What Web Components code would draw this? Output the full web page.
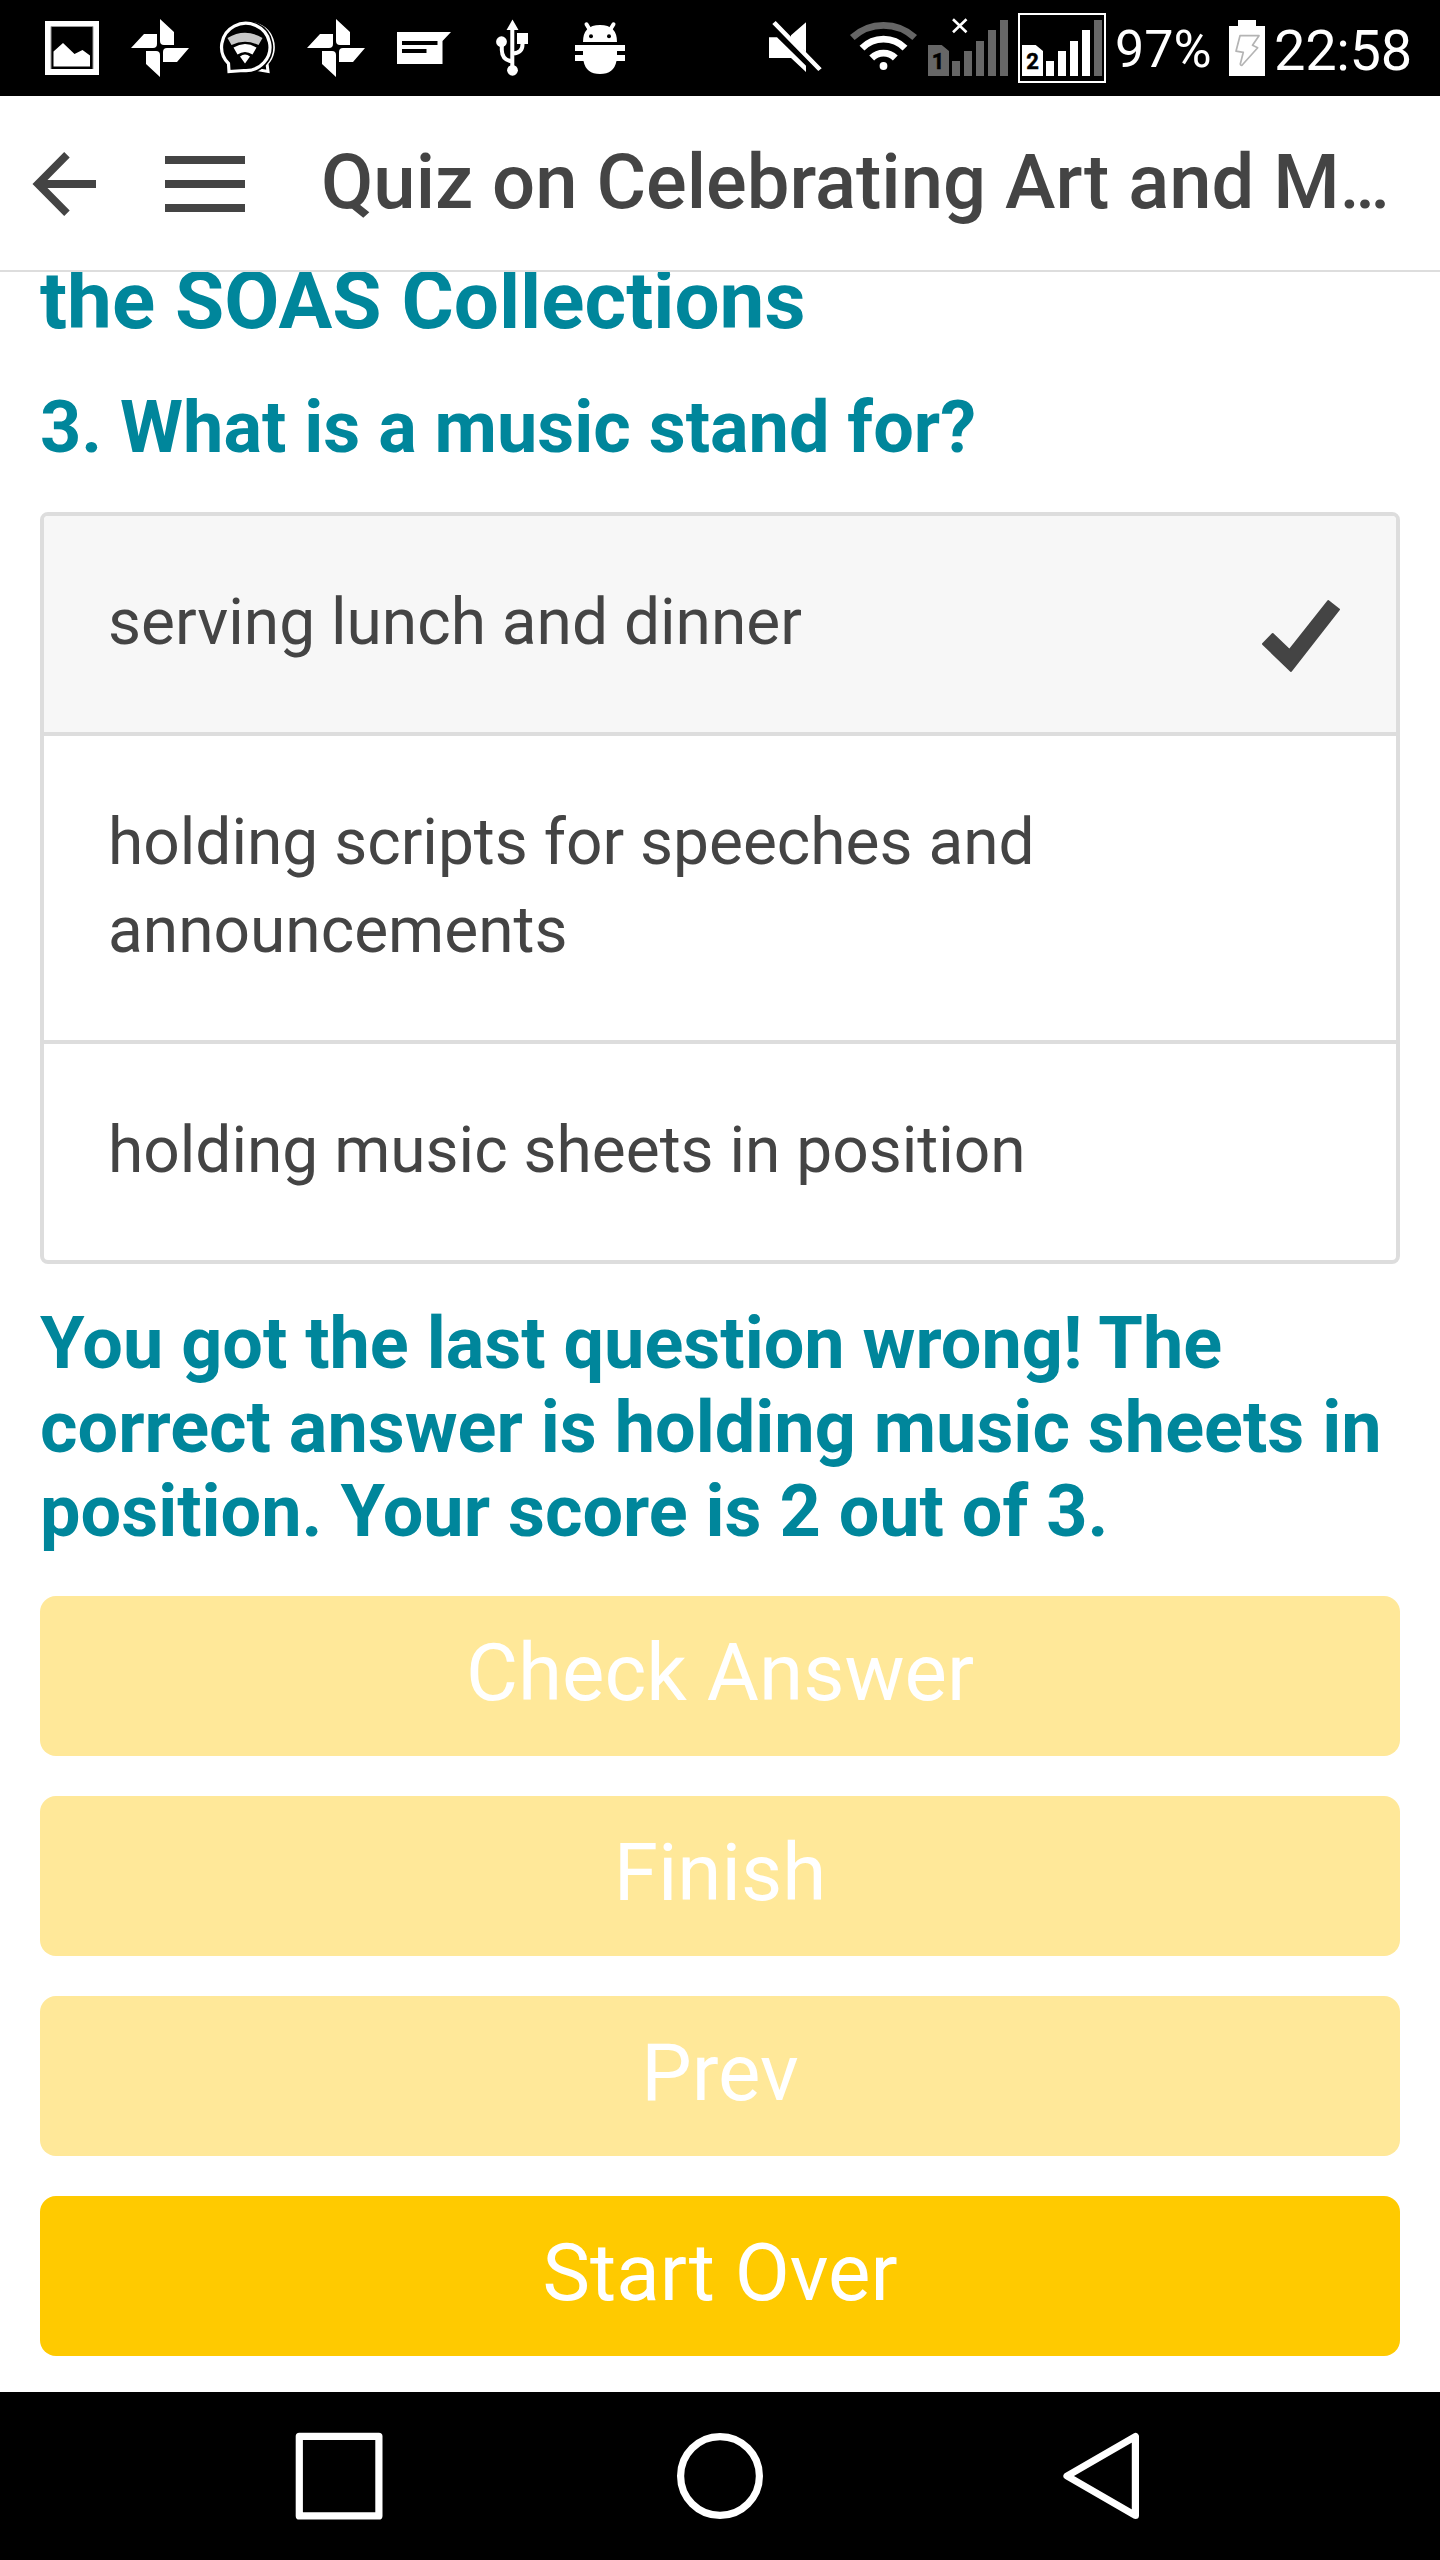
<!DOCTYPE html>
<html lang="en">
<head>
<meta charset="utf-8">
<title>Quiz</title>
<style>
html, body { margin: 0; }
body { width: 1440px; height: 2560px; overflow: hidden; background: #fff; font-family: Roboto, "Noto Sans", sans-serif; }
</style>
</head>
<body>
<quiz-app></quiz-app>

<script>
const define = (name, html, setup) => customElements.define(name, class extends HTMLElement {
  constructor() {
    super();
    const template = document.createElement('template');
    template.innerHTML = html;
    this.attachShadow({ mode: 'open' }).append(template.content.cloneNode(true));
  }
  connectedCallback() { if (setup) setup(this, this.shadowRoot); }
});

/* Status bar glyphs: [left edge, width, drawing] on a 96px tall strip */
const pinwheel = '<path d="M160 19L174 32V45H164Q160 45 160 41ZM131 48L144 34H157V44Q157 48 153 48ZM189 48L177 62H163V52Q163 48 167 48ZM160 77L146 64V51H156Q160 51 160 55Z"/>';
const glyphs = {
  image: [45, 54, '<path fill-rule="evenodd" d="M45 21H99V75H45ZM51 27V69H93V27Z"/><path fill="none" stroke="#999" d="M51 69V26.5H93V69"/><path d="M53.5 51.500L63 43L74.500 54L82.500 50L90 55.500V66.500H53.500Z"/>'],
  pinwheel: [131, 58, pinwheel],
  chat: [218, 60, `
    <g fill="none" stroke="#fff" stroke-width="3.200">
      <path d="M253 23.500A24 24 0 0 1 267 63.500L268 71.500L251 68.500" stroke-width="3"/>
      <path fill="#000" stroke="#000" stroke-width="6" d="M228.500 63A24 23.500 0 1 1 244 70.500L229 71.500Z"/>
      <path fill="#000" d="M228.500 63.500A24.200 23.600 0 1 1 244 70.500L229 71.500Z"/>
    </g>
    <path fill="#c8c8c8" d="M227.500 38Q245 27.500 262.500 38L258.500 45Q245 38.500 231.500 45Z"/>
    <path d="M233.500 47.500Q245 40.500 256.500 47.500L252.500 54.500Q245 49.500 237.500 54.500ZM240 56.500Q245 52.500 250 56.500L245 63.500Z"/>`],
  message: [397, 54, '<path fill-rule="evenodd" d="M397 32H451L442.500 41V64H397ZM402 41V45H437.500V41ZM402 49V53H426.500V49Z"/>'],
  usb: [496, 32, '<path d="M512.500 19.500L518.500 30H506.500ZM517 33H528V44H517Z"/><circle cx="501.500" cy="41.700" r="5.400"/><circle cx="512.500" cy="70.300" r="5.400"/><g fill="none" stroke="#fff" stroke-width="4"><path d="M512.300 28V68M501.800 44V50Q502 60 512 61.500M522.500 43Q523 53 513 53.500"/></g>'],
  bug: [575, 50, '<path d="M583 42Q583 25 600 25Q617 25 617 42ZM575 45H625V51H617V55H625V61H616.500Q614 74 600 74Q586 74 583.500 61H575V55H583V51H575Z"/><path fill="none" stroke="#fff" stroke-width="4" stroke-linecap="round" d="M586.500 24.300L590 30M613.500 24.300L610 30"/><g fill="#000"><circle cx="591" cy="36.300" r="2"/><circle cx="609" cy="36.300" r="2"/></g>'],
  mute: [769, 54, '<path d="M769 37.300H777L806 65.700V72L791 58H769ZM791 35.300L806 22.300V52L791 37ZM772.300 24L775.700 21L821.700 68.300L818.300 71Z"/>'],
  wifi: [850, 67, '<g fill="none" stroke="#fff" stroke-width="6.800"><path stroke="#666" d="M852.300 37.600A46 46 0 0 1 914.700 37.600"/><path d="M862 48.200A30 30 0 0 1 905 48.200"/><path d="M871.700 58A16.500 16.500 0 0 1 895.300 58"/></g><circle cx="883.500" cy="66" r="3.900"/>'],
  sim1: [928, 80, '<path fill="#666" d="M928 45H941.700L949 51V76H928ZM952 61H960V76H952ZM964 51H972V76H964ZM976 41H984V76H976ZM988 30H996V76H988ZM1000 20H1008V76H1000Z"/><text x="938" y="69" font-size="22" font-weight="700" text-anchor="middle" fill="#000" stroke="#000" stroke-width=".5">1</text><path fill="none" stroke="#fff" stroke-width="2.600" d="M953 19.300L966.500 32.300M966.500 19.300L953 32.300"/>'],
  sim2: [1018, 88, '<path fill="none" stroke="#fff" stroke-width="2" d="M1019 14H1105V82H1019Z"/><path d="M1022 45H1035.700L1043 51V76H1022ZM1046 61H1054V76H1046ZM1058 51H1066V76H1058ZM1070 41H1078V76H1070ZM1082 30H1090V76H1082Z"/><path fill="#666" d="M1094 20H1102V76H1094Z"/><text x="1032.500" y="69" font-size="22" font-weight="700" text-anchor="middle" fill="#000" stroke="#000" stroke-width=".5">2</text>'],
  battery: [1229, 36, '<path d="M1238 20H1256V26H1265V76H1229V26H1238Z"/><path fill="none" stroke="#b4b4b4" stroke-width="1.700" stroke-linejoin="round" d="M1240 35.700H1259L1252.500 45.300L1257.700 47.700L1242 65.300Q1240.500 65.500 1240.300 64L1243.300 52.300L1236 51.200Z"/>']
};

define('status-glyph', `
<style>:host{display:block;flex:none;height:96px}svg{display:block;overflow:visible;fill:#fff;font-family:Roboto,sans-serif}</style>
<svg height="96"></svg>`, (host, root) => {
  const [x, w, art] = glyphs[host.getAttribute('name')];
  const svg = root.querySelector('svg');
  svg.setAttribute('width', w);
  svg.setAttribute('viewBox', `${x} 0 ${w} 96`);
  svg.innerHTML = art;
});

define('status-bar', `
<style>
:host{display:flex;justify-content:space-between;height:96px;background:#000;color:#fff;padding:0 27px 0 45px;flex:none}
div{display:flex}
.right{width:644px}
span{white-space:nowrap;flex:none}
.pct{font-size:52px;line-height:100px;width:112px;margin-left:9px;margin-right:2px;box-sizing:border-box}
.time{font-size:56px;line-height:102px;margin-left:9px;letter-spacing:-.3px}
</style>
<div>
<status-glyph name="image"></status-glyph>
<status-glyph name="pinwheel" style="margin-left:32px"></status-glyph>
<status-glyph name="chat" style="margin-left:29px"></status-glyph>
<status-glyph name="pinwheel" style="margin-left:29px"></status-glyph>
<status-glyph name="message" style="margin-left:32px"></status-glyph>
<status-glyph name="usb" style="margin-left:45px"></status-glyph>
<status-glyph name="bug" style="margin-left:47px"></status-glyph>
</div>
<div class="right">
<status-glyph name="mute"></status-glyph>
<status-glyph name="wifi" style="margin-left:27px"></status-glyph>
<status-glyph name="sim1" style="margin-left:11px"></status-glyph>
<status-glyph name="sim2" style="margin-left:10px"></status-glyph>
<span class="pct">97%</span>
<status-glyph name="battery"></status-glyph>
<span class="time">22:58</span>
</div>`);

define('app-header', `
<style>
:host{display:flex;flex:none;box-sizing:border-box;height:176px;border-bottom:2px solid #ddd;background:#fff;color:#444;padding-left:32px}
svg{display:block;fill:#444;flex:none}
.menu{margin-left:69px}
h1{margin:0 0 0 76px;font-size:76px;font-weight:500;line-height:172px;white-space:nowrap}
::slotted(.more){font-size:70px;line-height:1}
</style>
<svg width="64" height="174" viewBox="32 96 64 174"><path d="M32.500 184L64.200 152L69.700 157.500L47.500 180H96V188H47.500L69.700 210.500L64.200 216Z"/></svg>
<svg class="menu" width="80" height="174" viewBox="165 96 80 174"><path d="M165 156H245V164H165ZM165 180H245V188H165ZM165 204H245V212H165Z"/></svg>
<h1><slot></slot></h1>`);

define('quiz-option', `
<style>
:host{display:flex;justify-content:space-between;padding:63px 56px 65px 64px;font-size:64px;line-height:88px;color:#444}
:host([selected]){background:#f7f7f7}
svg{display:none;flex:none;fill:#444;stroke:#444;stroke-width:2;stroke-linejoin:round}
:host([selected]) svg{display:block}
.text{max-width:1100px}
</style>
<div class="text"><slot></slot></div>
<svg width="78" height="88" viewBox="1262 579 78 88" overflow="visible"><path d="M1263 644L1272.700 634L1289.400 650L1328.200 601L1339 609.500L1291 671Z"/></svg>`);

define('option-list', `
<style>
:host{display:block;border:4px solid #ddd;border-radius:8px;overflow:hidden}
::slotted(quiz-option:not(:first-child)){border-top:4px solid #ddd}
</style><slot></slot>`);

define('quiz-button', `
<style>
:host{display:block}
button{display:block;width:100%;height:160px;margin:0;border:0;padding:0 0 6px;border-radius:16px;background:#ffca00;color:#fff;font:400 80px/154px Roboto,sans-serif;text-align:center}
:host([disabled]) button{background:#ffe899}
</style><button><slot></slot></button>`);

define('quiz-page', `
<style>
:host{display:block;height:2120px;overflow:hidden;background:#fff;color:#00869b;padding:0 40px;box-sizing:border-box;flex:none}
h2,h3,p{margin:0;font-weight:700}
h2{font-size:80px;line-height:96px}
h3,p{font-size:72px;line-height:84px}
h3{margin-top:37px}
option-list{margin-top:42px}
p{margin-top:38px;white-space:nowrap}
.actions{display:flex;flex-direction:column;gap:40px;margin-top:42px}
.scroll{display:flow-root;margin-top:-19px}
</style>
<div class="scroll">
<h2>the SOAS Collections</h2>
<h3>3. What is a music stand for?</h3>
<option-list>
<quiz-option selected>serving lunch and dinner</quiz-option>
<quiz-option>holding scripts for speeches and announcements</quiz-option>
<quiz-option>holding music sheets in position</quiz-option>
</option-list>
<p>You got the last question wrong! The<br>correct answer is holding music sheets in<br>position. Your score is 2 out of 3.</p>
<div class="actions">
<quiz-button disabled>Check Answer</quiz-button>
<quiz-button disabled>Finish</quiz-button>
<quiz-button disabled>Prev</quiz-button>
<quiz-button>Start Over</quiz-button>
</div>
</div>`);

define('nav-bar', `
<style>
:host{display:flex;justify-content:space-between;align-items:center;height:168px;box-sizing:border-box;padding:0 300px 0 295px;background:#000;flex:none}
svg{display:block;fill:none;stroke:#fff;stroke-width:7.200;stroke-linejoin:round}
</style>
<svg width="88" height="88"><rect x="4.300" y="4.300" width="79.600" height="79.600"/></svg>
<svg width="88" height="88" style="margin-right:5px"><circle cx="44" cy="44" r="39.400"/></svg>
<svg width="78" height="88"><path d="M5 44L73.400 4.500V83.500Z"/></svg>`);

define('quiz-app', `
<style>:host{display:flex;flex-direction:column;width:1440px;height:2560px}</style>
<status-bar></status-bar>
<app-header>Quiz on Celebrating Art and M<span class="more">…</span></app-header>
<quiz-page></quiz-page>
<nav-bar></nav-bar>`);
</script>
</body>
</html>
